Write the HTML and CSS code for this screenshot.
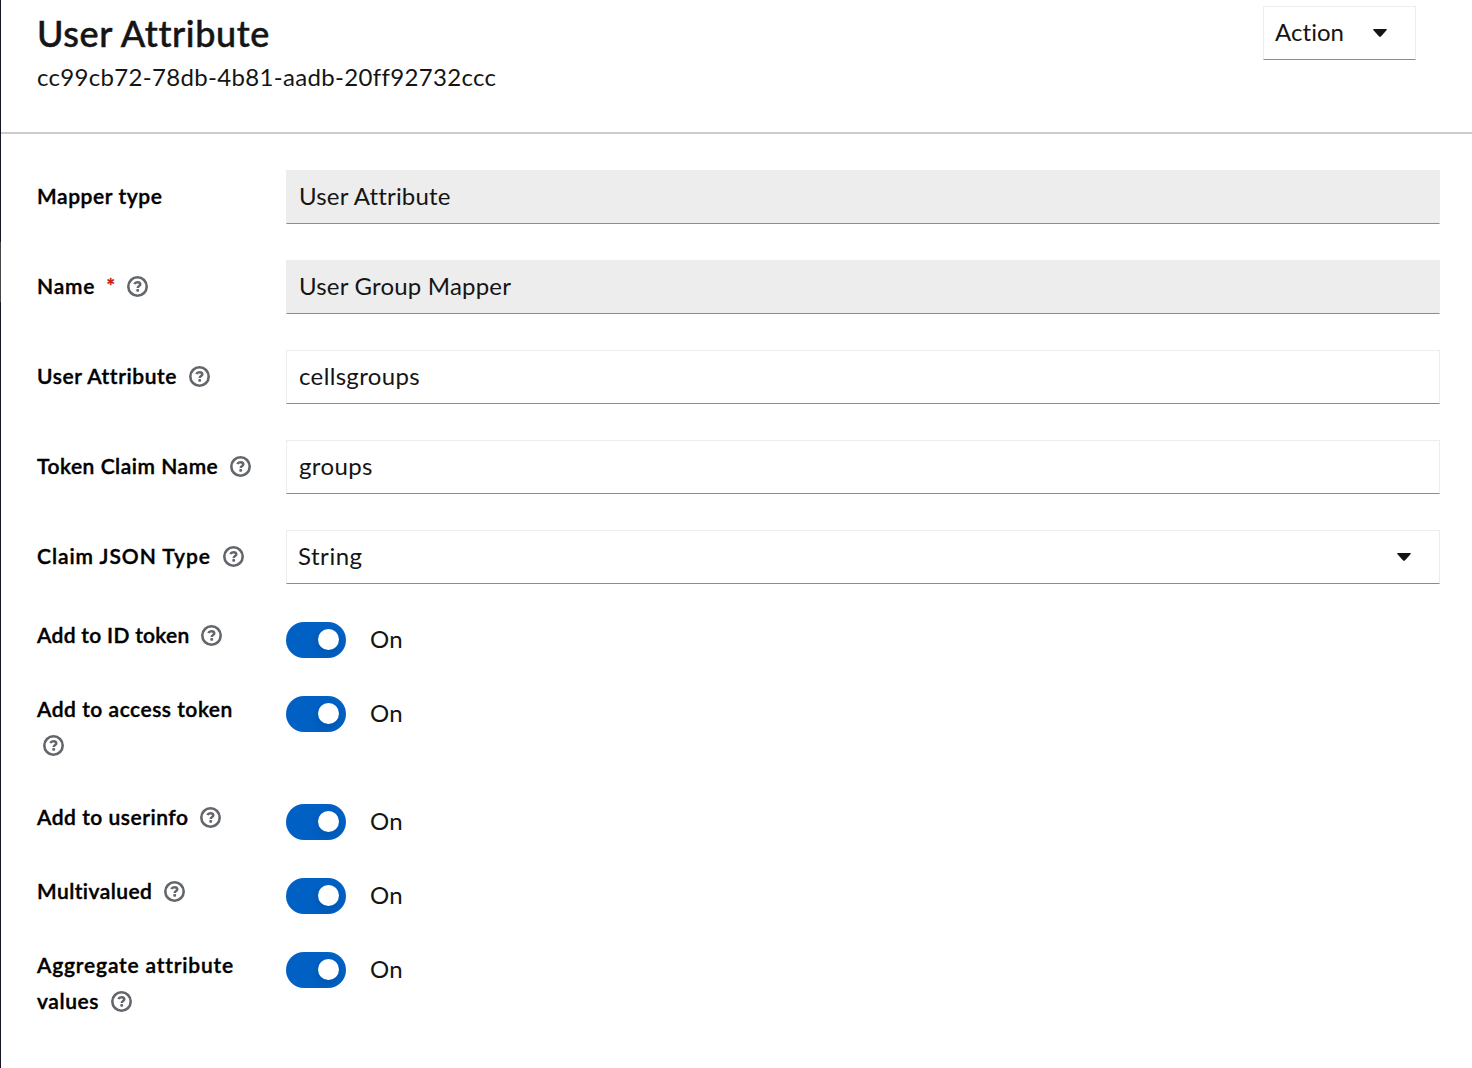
FILE: index.html
```
<!DOCTYPE html>
<html lang="en">
<head>
<meta charset="utf-8">
<title>User Attribute</title>
<link rel="stylesheet" href="styles.css">
</head>
<body>
<svg class="sprite" aria-hidden="true">
  <symbol id="help" viewBox="0 0 21 21">
    <circle cx="10.5" cy="10.5" r="9.2" fill="none" stroke="currentColor" stroke-width="2.6"/>
    <path d="M7.3 8.1C7.9 6.8 9 6.2 10.4 6.2C12.1 6.2 13.3 7 13.3 8.3C13.3 10 10.7 9.9 10.7 12" fill="none" stroke="currentColor" stroke-width="2.5"/>
    <rect x="9.3" y="13" width="2.8" height="2.8" rx=".8" fill="currentColor"/>
  </symbol>
  <symbol id="caret" viewBox="0 0 14 8">
    <path d="M.8 0H13.2Q14.3.4 13.5 1.3L7.9 7.4Q7 8.2 6.1 7.4L.5 1.3Q-.3.4.8 0Z" fill="currentColor"/>
  </symbol>
</svg>
<div class="page">
  <header class="header">
    <div>
      <h1 class="title">User Attribute</h1>
      <div class="mapper-id">cc99cb72-78db-4b81-aadb-20ff92732ccc</div>
    </div>
    <button class="action" type="button"><span>Action</span><svg class="caret"><use href="#caret"/></svg></button>
  </header>
  <form class="form">
    <div class="row">
      <label class="label t-60">Mapper type</label>
      <div class="field readonly t-20"><span>User Attribute</span></div>
    </div>
    <div class="row">
      <label class="label t-80">Name <span class="required">*</span> <svg class="help"><use href="#help"/></svg></label>
      <div class="field readonly t-20"><span>User Group Mapper</span></div>
    </div>
    <div class="row">
      <label class="label t-60">User Attribute <svg class="help"><use href="#help"/></svg></label>
      <div class="field t-36"><span>cellsgroups</span></div>
    </div>
    <div class="row">
      <label class="label t-52">Token Claim Name <svg class="help"><use href="#help"/></svg></label>
      <div class="field t-36"><span>groups</span></div>
    </div>
    <div class="row">
      <label class="label t-95">Claim JSON Type <svg class="help"><use href="#help"/></svg></label>
      <div class="field select t-52"><span>String</span><svg class="caret"><use href="#caret"/></svg></div>
    </div>
    <div class="row switch-row">
      <label class="label t-30">Add to ID token <svg class="help"><use href="#help"/></svg></label>
      <div class="switch"><span class="track"></span><span class="state">On</span></div>
    </div>
    <div class="row switch-row">
      <label class="label t-52">Add to access token <svg class="help"><use href="#help"/></svg></label>
      <div class="switch"><span class="track"></span><span class="state">On</span></div>
    </div>
    <div class="row switch-row">
      <label class="label t-52">Add to userinfo <svg class="help"><use href="#help"/></svg></label>
      <div class="switch"><span class="track"></span><span class="state">On</span></div>
    </div>
    <div class="row switch-row">
      <label class="label t-45">Multivalued <svg class="help"><use href="#help"/></svg></label>
      <div class="switch"><span class="track"></span><span class="state">On</span></div>
    </div>
    <div class="row switch-row">
      <label class="label t-80">Aggregate attribute <span class="t-60">values <svg class="help"><use href="#help"/></svg></span></label>
      <div class="switch"><span class="track"></span><span class="state">On</span></div>
    </div>
  </form>
</div>
</body>
</html>
```
FILE: styles.css
```
* { box-sizing: border-box; }
body {
  margin: 0;
  background: #fff;
  color: #151515;
  font: 24px/36px Lato, sans-serif;
  font-variant-ligatures: none;
}
.sprite { display: none; }
.page {
  min-height: 1068px;
  padding-left: 1px;
  background: linear-gradient(#141823 0 242px, #44474c 242px 302px, #141823 302px) left / 1px 100% no-repeat;
}
.header {
  display: flex;
  justify-content: space-between;
  align-items: flex-start;
  height: 134px;
  padding: 6px 56px 0 36px;
  border-bottom: 2px solid #ccc;
}
.title {
  margin: 4px 0 2px;
  font-size: 36px;
  line-height: 47px;
  font-weight: 500;
  letter-spacing: .6px;
  -webkit-text-stroke: .5px currentColor;
}
.mapper-id { letter-spacing: .32px; }
.action {
  display: flex;
  align-items: center;
  justify-content: space-between;
  width: 153px;
  height: 54px;
  padding: 0 28px 1px 11px;
  font: inherit;
  letter-spacing: .05px;
  color: inherit;
  background: #fff;
  border: 1px solid #ededed;
  border-bottom-color: #8a8d90;
}
.action span,
.field span { padding-bottom: 2px; }
.caret { width: 14px; height: 8px; flex: none; }
.form {
  display: flex;
  flex-direction: column;
  gap: 36px;
  padding: 36px 32px 0 36px;
}
.row {
  display: grid;
  grid-template-columns: 213px 1fr;
  column-gap: 36px;
  align-items: start;
}
.label {
  padding-top: 8px;
  margin-right: -10px;
  font-size: 21px;
  font-weight: 600;
  color: #000;
  -webkit-text-stroke: .4px currentColor;
}
.required {
  margin: 0 -1.5px 0 5px;
  font-size: 21px;
  line-height: 1;
  color: #c9190b;
}
.help {
  width: 21px;
  height: 21px;
  margin-left: 6px;
  vertical-align: -3px;
  color: #63676c;
}
.field {
  display: flex;
  align-items: center;
  height: 54px;
  padding: 0 12px 1px;
  border: 1px solid #ededed;
  border-bottom-color: #8a8d90;
}
.readonly { background: #ededed; }
.select { justify-content: space-between; padding: 0 28px 1px 11px; }
.switch-row .label { padding: 0; margin: -3px -10px 3px 0; }
.switch-row .switch { padding-top: 2px; }
.switch { display: flex; gap: 24px; }
.track {
  display: flex;
  justify-content: flex-end;
  align-items: center;
  width: 60px;
  height: 36px;
  padding: 0 7px 1px 0;
  border-radius: 18px;
  background: #0060c4;
}
.track::after {
  content: "";
  width: 21px;
  height: 21px;
  border-radius: 50%;
  background: #fff;
  box-shadow: 0 4px 10px rgba(0, 0, 0, .14);
}
.state { line-height: 33px; letter-spacing: .4px; }

/* Letter tracking, in hundredths of a pixel */
.t-20 { letter-spacing: .19px; }
.t-30 { letter-spacing: .3px; }
.t-36 { letter-spacing: .36px; }
.t-45 { letter-spacing: .45px; }
.t-52 { letter-spacing: .52px; }
.t-60 { letter-spacing: .6px; }
.t-80 { letter-spacing: .82px; }
.t-95 { letter-spacing: .95px; }
```
